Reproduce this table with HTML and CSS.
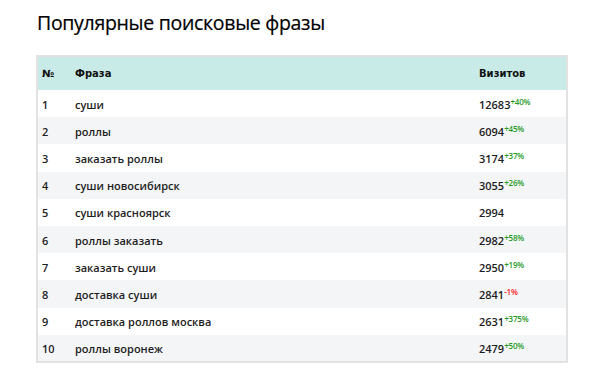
FILE: index.html
```html
<!DOCTYPE html>
<html lang="ru">
<head>
<meta charset="utf-8">
<link rel="stylesheet" href="styles.css">
</head>
<body>
<div class="page">
  <h1 class="title">Популярные поисковые фразы</h1>
  <table class="phrases">
    <thead>
      <tr><th class="c-num">№</th><th class="c-phrase">Фраза</th><th class="c-visits">Визитов</th></tr>
    </thead>
    <tbody>
      <tr><td>1</td><td>суши</td><td>12683<sup class="up">+40%</sup></td></tr>
      <tr><td>2</td><td>роллы</td><td>6094<sup class="up">+45%</sup></td></tr>
      <tr><td>3</td><td>заказать роллы</td><td>3174<sup class="up">+37%</sup></td></tr>
      <tr><td>4</td><td>суши новосибирск</td><td>3055<sup class="up">+26%</sup></td></tr>
      <tr><td>5</td><td>суши красноярск</td><td>2994</td></tr>
      <tr><td>6</td><td>роллы заказать</td><td>2982<sup class="up">+58%</sup></td></tr>
      <tr><td>7</td><td>заказать суши</td><td>2950<sup class="up">+19%</sup></td></tr>
      <tr><td>8</td><td>доставка суши</td><td>2841<sup class="down">-1%</sup></td></tr>
      <tr><td>9</td><td>доставка роллов москва</td><td>2631<sup class="up">+375%</sup></td></tr>
      <tr><td>10</td><td>роллы воронеж</td><td>2479<sup class="up">+50%</sup></td></tr>
    </tbody>
  </table>
</div>
</body>
</html>
```

FILE: styles.css
```css
html, body {
  margin: 0;
  padding: 0;
  background: #ffffff;
}
.page {
  padding: 9px 0 0 36px;
  width: 532px;
}
.title {
  margin: 0 0 0 1px;
  font-family: "Open Sans", "Noto Sans", sans-serif;
  font-weight: 400;
  font-size: 19.5px;
  line-height: 28px;
  color: #000;
  letter-spacing: -0.3px;
  -webkit-text-stroke: 0.2px #000;
}
.phrases {
  margin-top: 18px;
  width: 532px;
  border-collapse: collapse;
  border: 2px solid #e2e2e2;
  font-family: "Open Sans", "Noto Sans", sans-serif;
  font-size: 11px;
  font-weight: 600;
  color: #1d1d1d;
}
.phrases th {
  background: #c9ebe7;
  height: 33px;
  padding: 0 0 0 4px;
  text-align: left;
  font-family: "DejaVu Sans", sans-serif;
  font-size: 10px;
  font-weight: 700;
  color: #111;
  vertical-align: middle;
}
.phrases td {
  height: 27.2px;
  padding: 1px 0 0 4px;
  box-sizing: border-box;
  vertical-align: middle;
}
.phrases tbody tr:nth-child(even) td {
  background: #f4f5f7;
}
.c-num { width: 29px; }
.c-phrase { width: 400px; }
sup {
  font-size: 8px;
  font-weight: 600;
  vertical-align: 4px;
  line-height: 0;
  letter-spacing: -0.2px;
}
.up { color: #1f9a1f; }
.down { color: #ff1a1a; }
```
